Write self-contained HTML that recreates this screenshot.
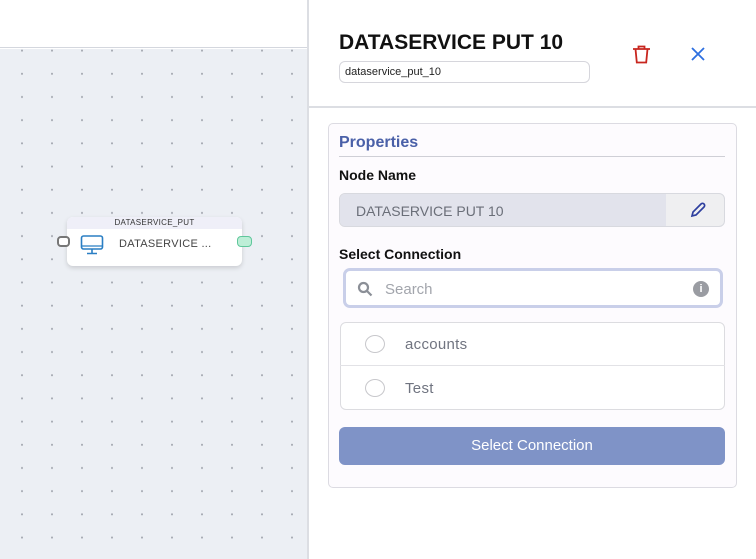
<!DOCTYPE html>
<html><head><style>
*{box-sizing:border-box;margin:0;padding:0}
body{width:756px;height:559px;position:relative;overflow:hidden;background:#fff;font-family:"Liberation Sans",sans-serif}
.a{position:absolute}
</style></head><body>
<div class="a" style="left:0;top:0;width:307px;height:48px;background:#fff;border-bottom:1px solid #d4d7de"></div>
<div class="a" style="left:0;top:49px;width:307px;height:510px;background-color:#eceff4;background-image:radial-gradient(circle,#a9adb5 0.9px,transparent 1.2px);background-size:30px 23.2px;background-position:7px -10px"></div>
<div class="a" style="left:307px;top:0;width:2px;height:559px;background:#dcdee3"></div>

<div class="a" style="left:67px;top:217px;width:175px;height:49px;background:#fff;border-radius:6px;box-shadow:0 2px 5px rgba(0,0,0,.15);overflow:hidden">
 <div style="height:12px;background:#efeff8;font-size:8px;color:#333;text-align:center;line-height:12px;letter-spacing:.3px">DATASERVICE_PUT</div>
 <svg class="a" style="left:13px;top:18px" width="24" height="20" viewBox="0 0 24 20"><rect x="1.5" y="1" width="21" height="13" rx="2" fill="none" stroke="#2a7fc4" stroke-width="1.6"/><line x1="2" y1="11" x2="22" y2="11" stroke="#2a7fc4" stroke-width="1.2"/><line x1="12" y1="14" x2="12" y2="18" stroke="#2a7fc4" stroke-width="1.6"/><line x1="7" y1="18.5" x2="17" y2="18.5" stroke="#2a7fc4" stroke-width="1.6"/></svg>
 <div class="a" style="left:52px;top:21px;font-size:11px;color:#444;letter-spacing:.3px">DATASERVICE ...</div>
</div>
<div class="a" style="left:57px;top:236px;width:13px;height:11px;border:2px solid #777;border-radius:4px;background:#fff"></div>
<div class="a" style="left:237px;top:236px;width:15px;height:11px;border:1.5px solid #5fc79b;border-radius:4px;background:#bdeed7"></div>

<div class="a" style="left:339px;top:31px;font-size:21px;font-weight:bold;color:#111">DATASERVICE PUT 10</div>
<div class="a" style="left:339px;top:61px;width:251px;height:22px;border:1px solid #d6d6dc;border-radius:6px;font-size:11px;line-height:20px;padding-left:5px;color:#222">dataservice_put_10</div>
<svg class="a" style="left:631px;top:44px" width="21" height="21" viewBox="0 0 21 21" fill="none" stroke="#c8261f" stroke-width="1.8"><path d="M2 5h17M7.5 5V2.5h6V5M4.5 5l1.3 13.5h9.4L16.5 5"/></svg>
<svg class="a" style="left:690px;top:46px" width="16" height="16" viewBox="0 0 16 16" stroke="#2d6fe0" stroke-width="1.8"><path d="M2 2l12 12M14 2L2 14"/></svg>
<div class="a" style="left:309px;top:106px;width:447px;height:2px;background:#dcdee3"></div>

<div class="a" style="left:328px;top:123px;width:409px;height:365px;border:1px solid #dcdbe2;border-radius:5px;background:#fdfbfe"></div>
<div class="a" style="left:339px;top:134px;font-size:16px;font-weight:bold;color:#4a60a8">Properties</div>
<div class="a" style="left:339px;top:156px;width:386px;height:1px;background:#cfcfd6"></div>
<div class="a" style="left:339px;top:167px;font-size:14px;font-weight:bold;color:#111">Node Name</div>
<div class="a" style="left:339px;top:193px;width:386px;height:34px;border:1px solid #d8d9df;border-radius:6px;background:#efeff1;overflow:hidden">
 <div style="width:326px;height:100%;background:#e2e3ec;font-size:14px;color:#6a6e78;line-height:34px;padding-left:16px">DATASERVICE PUT 10</div>
</div>
<svg class="a" style="left:689px;top:201px" width="20" height="18" viewBox="0 0 20 18" fill="none" stroke="#2e3f9f" stroke-width="1.7"><path d="M3 15l1-4 8-8a2.1 2.1 0 0 1 3 3l-8 8z"/></svg>
<div class="a" style="left:339px;top:246px;font-size:14px;font-weight:bold;color:#111">Select Connection</div>
<div class="a" style="left:343px;top:268px;width:380px;height:40px;border:3px solid #c9cfe9;border-radius:7px;background:#fff"></div>
<svg class="a" style="left:357px;top:281px" width="16" height="16" viewBox="0 0 16 16" fill="none" stroke="#8b8f97" stroke-width="2.2"><circle cx="6.5" cy="6.5" r="4.5"/><path d="M10 10l4.5 4.5"/></svg>
<div class="a" style="left:385px;top:281px;font-size:15px;color:#a2a5ac">Search</div>
<div class="a" style="left:693px;top:281px;width:16px;height:16px;border-radius:50%;background:#9a9ca2;color:#fff;font-size:11px;font-weight:bold;text-align:center;line-height:16px">i</div>
<div class="a" style="left:340px;top:322px;width:385px;height:88px;border:1px solid #dcdce0;border-radius:6px;background:#fff"></div>
<div class="a" style="left:340px;top:365px;width:385px;height:1px;background:#e2e2e6"></div>
<div class="a" style="left:365px;top:335px;width:20px;height:18px;border:1.5px solid #c8c8cc;border-radius:50%"></div>
<div class="a" style="left:365px;top:379px;width:20px;height:18px;border:1.5px solid #c8c8cc;border-radius:50%"></div>
<div class="a" style="left:405px;top:336px;font-size:15px;color:#707480;letter-spacing:.3px">accounts</div>
<div class="a" style="left:405px;top:380px;font-size:15px;color:#707480;letter-spacing:.3px">Test</div>
<div class="a" style="left:339px;top:427px;width:386px;height:38px;border-radius:6px;background:#7f93c7;color:#fff;font-size:15px;text-align:center;line-height:38px">Select Connection</div>
</body></html>
